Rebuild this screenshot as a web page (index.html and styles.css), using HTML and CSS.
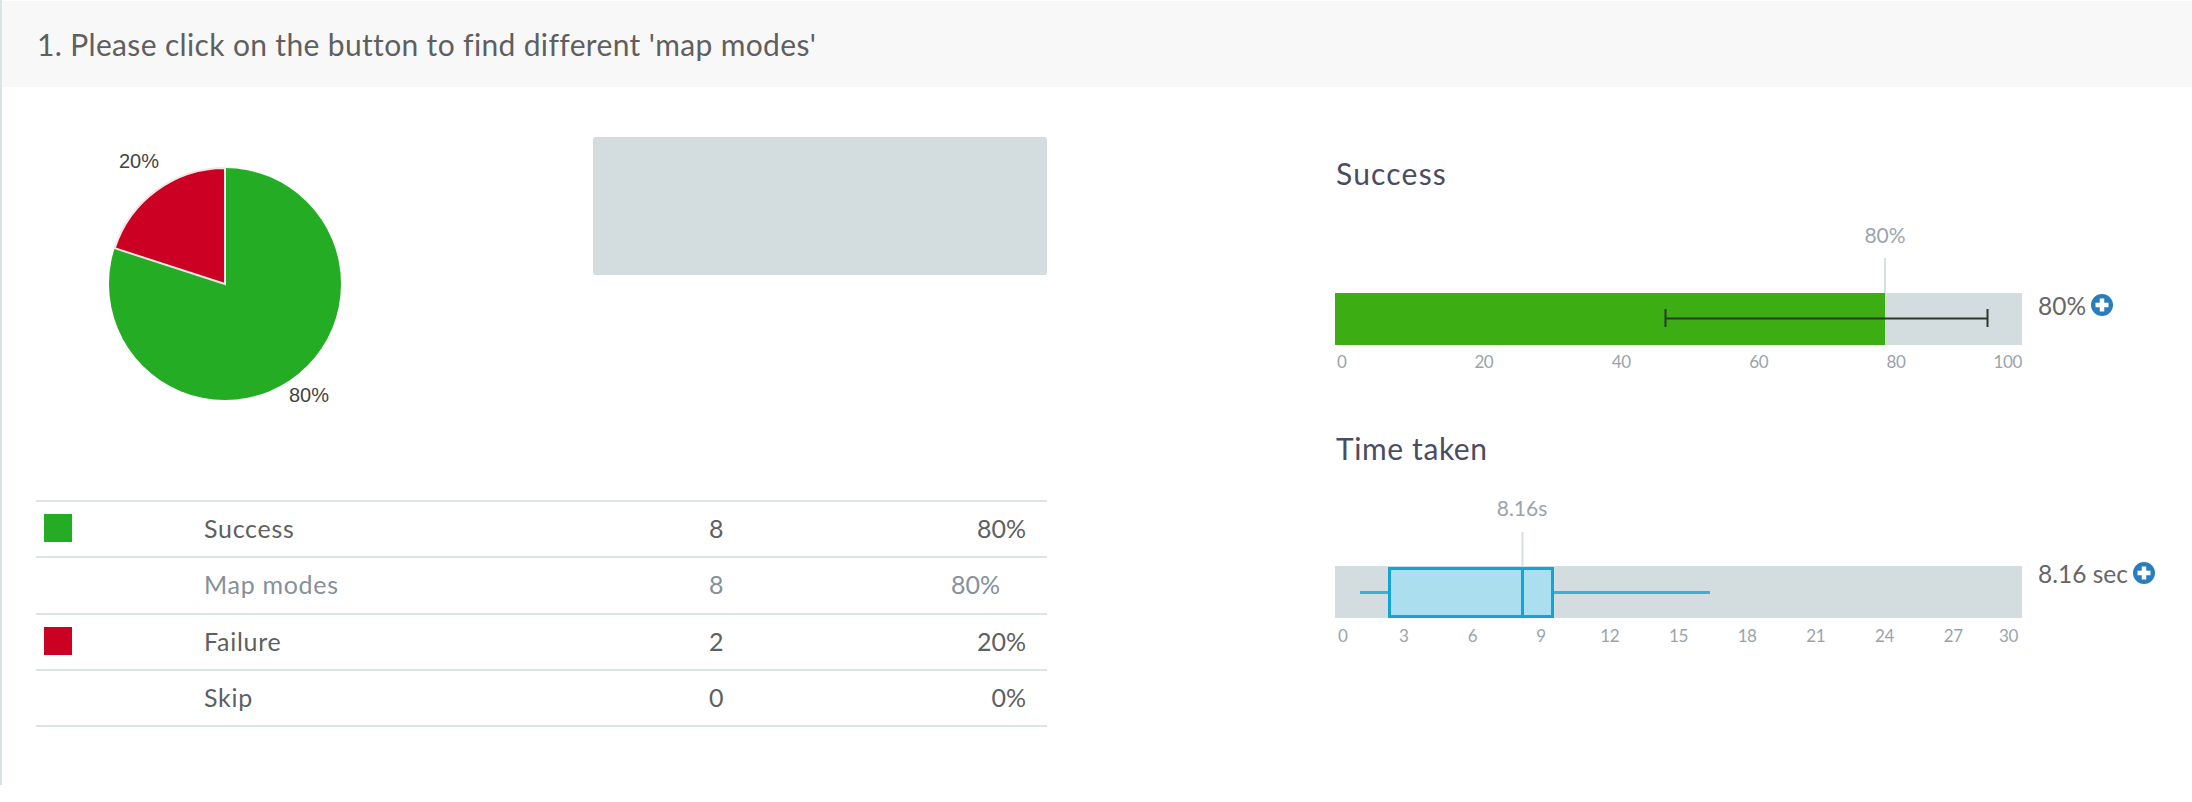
FILE: index.html
```html
<!DOCTYPE html>
<html lang="en">
<head>
<meta charset="utf-8">
<title>Question results</title>
<link rel="stylesheet" href="styles.css">
</head>
<body>
<main class="panel">
  <header class="question">1. Please click on the button to find different 'map modes'</header>
  <div class="content">
    <section class="summary">
      <div class="top">
        <svg class="pie" width="380" height="290" viewBox="0 0 380 290">
          <circle class="slice-green" cx="189" cy="147" r="116"/>
          <path class="slice-red" d="M189 147 L78.700 111.200 A116 116 0 0 1 189 31 Z"/>
          <text class="pie-label" x="83" y="31">20%</text>
          <text class="pie-label" x="253" y="265">80%</text>
        </svg>
        <div class="placeholder"></div>
      </div>
      <div class="table">
        <div class="row"><span class="swatch green"></span><span class="name">Success</span><span class="count">8</span><span class="pct">80%</span></div>
        <div class="row sub"><span class="swatch"></span><span class="name">Map modes</span><span class="count">8</span><span class="pct">80%</span></div>
        <div class="row"><span class="swatch red"></span><span class="name">Failure</span><span class="count">2</span><span class="pct">20%</span></div>
        <div class="row"><span class="swatch"></span><span class="name">Skip</span><span class="count">0</span><span class="pct">0%</span></div>
      </div>
    </section>
    <section class="metrics">
      <h2 class="metric-title wide">Success</h2>
      <div class="metric">
        <svg class="chart" width="700" height="154" viewBox="0 0 700 154">
          <text class="marker-label" x="550" y="51">80%</text>
          <line class="marker" x1="550" y1="66" x2="550" y2="101"/>
          <rect class="track" x="0" y="101" width="687" height="52"/>
          <rect class="fill" x="0" y="101" width="550" height="52"/>
          <path class="errbar" d="M330 126.500H653M330.500 117V135M652.500 117V135"/>
        </svg>
        <div class="score score-success"><span>80%</span>
          <svg class="plus" width="22" height="22" viewBox="0 0 22 22"><circle class="plus-bg" cx="11" cy="11" r="11"/><path class="plus-mark" d="M11 4.500v13M4.500 11h13"/></svg>
        </div>
      </div>
      <div class="ticks t-success">
        <span>0</span><span>20</span><span>40</span><span>60</span><span class="grow">80</span><span>100</span>
      </div>
      <h2 class="metric-title second">Time taken</h2>
      <div class="metric">
        <svg class="chart" width="700" height="152" viewBox="0 0 700 152">
          <text class="marker-label" x="187" y="49">8.16s</text>
          <line class="marker" x1="187.500" y1="65" x2="187.500" y2="99"/>
          <rect class="track" x="0" y="99" width="687" height="52"/>
          <path class="whisker" d="M25 125.500H54M218 125.500H375"/>
          <rect class="box" x="54.500" y="101.500" width="163" height="48"/>
          <line class="median" x1="187.500" y1="101" x2="187.500" y2="150"/>
        </svg>
        <div class="score score-time"><span>8.16 sec</span>
          <svg class="plus" width="22" height="22" viewBox="0 0 22 22"><circle class="plus-bg" cx="11" cy="11" r="11"/><path class="plus-mark" d="M11 4.500v13M4.500 11h13"/></svg>
        </div>
      </div>
      <div class="ticks t-time">
        <span>0</span><span>3</span><span>6</span><span>9</span><span>12</span><span>15</span><span>18</span><span>21</span><span>24</span><span>27</span><span>30</span>
      </div>
    </section>
  </div>
</main>
</body>
</html>
```

FILE: styles.css
```css
* { box-sizing: border-box; }
html, body { margin: 0; height: 100%; background: #fff; }
body { font-family: Lato, "Open Sans", Arial, sans-serif; color: #555; overflow: hidden; }
.panel { height: 785px; border-left: 2px solid #d8e4e6; }
.question {
  height: 87px; padding-left: 35px; background: #f8f8f8; border-top: 1px solid #fff;
  display: flex; align-items: center; font-size: 30px; letter-spacing: 0.350px; color: #5f5f5f;
}
.content { display: flex; }
.summary { width: 1046px; padding-left: 34px; flex: none; }
.top { display: flex; padding-top: 50px; height: 413px; }
.pie { flex: none; overflow: visible; }
.slice-green { fill: #24ac24; }
.slice-red { fill: #cb0022; stroke: #f3e6e6; stroke-width: 2; }
.pie-label { font-family: "Liberation Sans", Arial, sans-serif; font-size: 20px; fill: #444; }
.placeholder { width: 454px; height: 138px; margin-left: 177px; background: #d3dcdf; border-radius: 3px; }
.table { width: 1011px; border-top: 2px solid #dde5e7; }
.row {
  display: grid; grid-template-columns: 168px 505px 1fr 120px; align-items: center;
  height: 56.250px; padding-bottom: 2px; border-bottom: 2px solid #dde5e7;
  font-size: 25px; letter-spacing: 0.700px; color: #5f5f5f;
}
.swatch { width: 28px; height: 28px; margin-left: 8px; }
.swatch.green { background: #24ac24; }
.swatch.red { background: #cb0022; }
.count, .pct { letter-spacing: 0; }
.pct { text-align: right; padding-right: 21px; }
.sub { color: #85909a; }
.sub .pct { padding-right: 47px; }
.metrics { margin-left: 287px; padding-top: 67px; width: 857px; }
.metric-title { margin: 0 0 0 1px; font-size: 30px; font-weight: 400; letter-spacing: 0.600px; line-height: 38px; color: #4c4c60; }
.metric-title.wide { letter-spacing: 1.200px; }
.metric-title.second { margin-top: 55px; }
.metric { display: flex; }
.chart { flex: none; display: block; }
.marker-label { font-size: 21px; fill: #9aa5ab; text-anchor: middle; }
.marker { stroke: #d8dfe1; stroke-width: 2; }
.track { fill: #d3dcdf; }
.fill { fill: #3dad14; }
.errbar { fill: none; stroke: #2b3a2b; stroke-width: 2; }
.whisker { fill: none; stroke: #3fb0d4; stroke-width: 3; }
.box { fill: #abdeee; stroke: #12a4d2; stroke-width: 3; }
.median { stroke: #12a4d2; stroke-width: 3; }
.score { display: flex; align-items: center; gap: 5px; height: 26px; margin-left: 3px; font-size: 24.500px; color: #666; white-space: nowrap; }
.score-success { margin-top: 100px; }
.score-time { margin-top: 93px; }
.plus { display: block; flex: none; }
.plus-bg { fill: #2a7dbd; }
.plus-mark { stroke: #fff; stroke-width: 4.500; fill: none; }
.ticks { display: flex; width: 687px; height: 24px; line-height: 24px; font-size: 17px; letter-spacing: -0.400px; color: #99a4aa; }
.t-success { margin-top: 4px; }
.t-success span { flex: none; width: 137.400px; padding-left: 2px; }
.t-success span.grow { flex: 1; width: auto; }
.t-success span:last-child { width: auto; padding-left: 0; }
.t-time { margin-top: 5px; }
.t-time span { flex: none; width: 68.700px; text-align: center; }
.t-time span:first-child { width: 34.350px; text-align: left; padding-left: 3px; }
.t-time span:last-child { width: 34.350px; text-align: right; padding-right: 4px; }
```
